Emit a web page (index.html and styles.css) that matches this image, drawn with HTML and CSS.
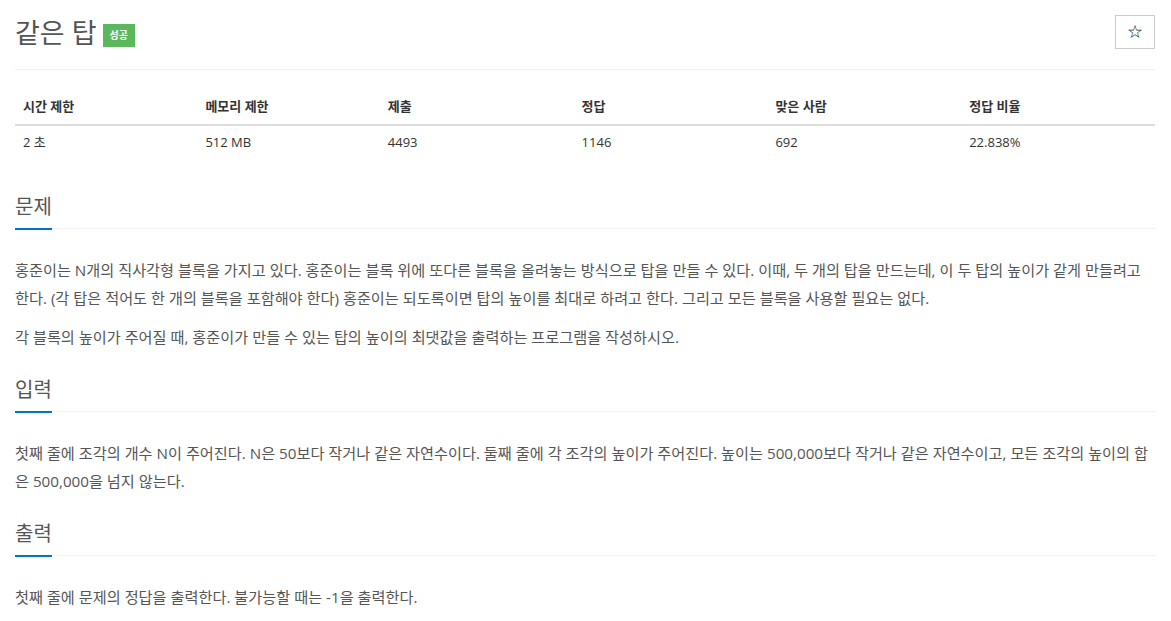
FILE: index.html
```html
<!DOCTYPE html>
<html lang="ko">
<head>
    <meta charset="UTF-8">
    <meta name="viewport" content="width=device-width, initial-scale=1.0">
    <title>같은 탑</title>
    <link rel="stylesheet" href="styles.css">
</head>
<body>
<div class="container">

    <div class="page-header">
        <h1>같은 탑 <span class="label-success">성공</span></h1>
        <button class="star-btn" title="즐겨찾기">☆</button>
    </div>

    <table class="info-table">
        <tr>
            <th class="w16">시간 제한</th>
            <th class="w16">메모리 제한</th>
            <th class="w17">제출</th>
            <th class="w17">정답</th>
            <th class="w17">맞은 사람</th>
            <th class="w17">정답 비율</th>
        </tr>
        <tr>
            <td>2 초</td>
            <td>512 MB</td>
            <td>4493</td>
            <td>1146</td>
            <td>692</td>
            <td>22.838%</td>
        </tr>
    </table>

    <section class="problem-section">
        <div class="headline"><h2>문제</h2></div>
        <div class="problem-text">
            <p>홍준이는 N개의 직사각형 블록을 가지고 있다. 홍준이는 블록 위에 또다른 블록을 올려놓는 방식으로 탑을 만들 수 있다. 이때, 두 개의 탑을 만드는데, 이 두 탑의 높이가 같게 만들려고 한다. (각 탑은 적어도 한 개의 블록을 포함해야 한다) 홍준이는 되도록이면 탑의 높이를 최대로 하려고 한다. 그리고 모든 블록을 사용할 필요는 없다.</p>
            <p>각 블록의 높이가 주어질 때, 홍준이가 만들 수 있는 탑의 높이의 최댓값을 출력하는 프로그램을 작성하시오.</p>
        </div>
    </section>

    <section class="problem-section">
        <div class="headline"><h2>입력</h2></div>
        <div class="problem-text">
            <p>첫째 줄에 조각의 개수 N이 주어진다. N은 50보다 작거나 같은 자연수이다. 둘째 줄에 각 조각의 높이가 주어진다. 높이는 500,000보다 작거나 같은 자연수이고, 모든 조각의 높이의 합은 500,000을 넘지 않는다.</p>
        </div>
    </section>

    <section class="problem-section">
        <div class="headline"><h2>출력</h2></div>
        <div class="problem-text">
            <p>첫째 줄에 문제의 정답을 출력한다. 불가능할 때는 -1을 출력한다.</p>
        </div>
    </section>

</div>
</body>
</html>
```

FILE: styles.css
```css
body {
    margin: 0;
    font-family: "Open Sans", "Noto Sans CJK KR", sans-serif;
    font-size: 13px;
    color: #333;
    background: #fff;
}
.container {
    padding: 0 16px 0 15px;
}
.page-header {
    display: flex;
    justify-content: space-between;
    align-items: flex-start;
    padding-top: 15px;
    padding-bottom: 18px;
    border-bottom: 1px solid #eee;
}
.page-header h1 {
    margin: 0;
    font-size: 27px;
    font-weight: 400;
    line-height: 36px;
    color: #555;
}
.label-success {
    display: inline-block;
    vertical-align: 4px;
    margin-left: -1px;
    background: #5cb85c;
    color: #fff;
    font-size: 10px;
    font-weight: 700;
    line-height: 23px;
    padding: 0 7px;
}
.star-btn {
    width: 40px;
    height: 34px;
    background: #fff;
    border: 1px solid #ccc;
    font-size: 16px;
    color: #333;
    cursor: pointer;
}
.info-table {
    width: 100%;
    border-collapse: collapse;
    margin-top: 18px;
    margin-bottom: 31px;
}
.info-table th, .info-table td {
    text-align: left;
    padding: 8px;
    line-height: 20px;
}
.info-table td {
    padding: 6px 8px 10px;
}
.info-table th {
    font-weight: 700;
    border-bottom: 2px solid #ddd;
}
.w16 { width: 16%; }
.w17 { width: 17%; }
.problem-section {
    margin-bottom: 25px;
}
.headline {
    border-bottom: 1px dotted #e4e9f0;
    margin-bottom: 27px;
}
.headline h2 {
    display: inline-block;
    margin: 0 0 -2px 0;
    padding-bottom: 7px;
    font-size: 20px;
    font-weight: 400;
    line-height: 28px;
    color: #555;
    border-bottom: 2px solid #0076c0;
}
.problem-text {
    font-size: 15.2px;
    line-height: 28px;
    color: #555;
}
.problem-text p {
    margin: 0 0 11px;
}
.problem-text p:last-child {
    margin-bottom: 0;
}
```
